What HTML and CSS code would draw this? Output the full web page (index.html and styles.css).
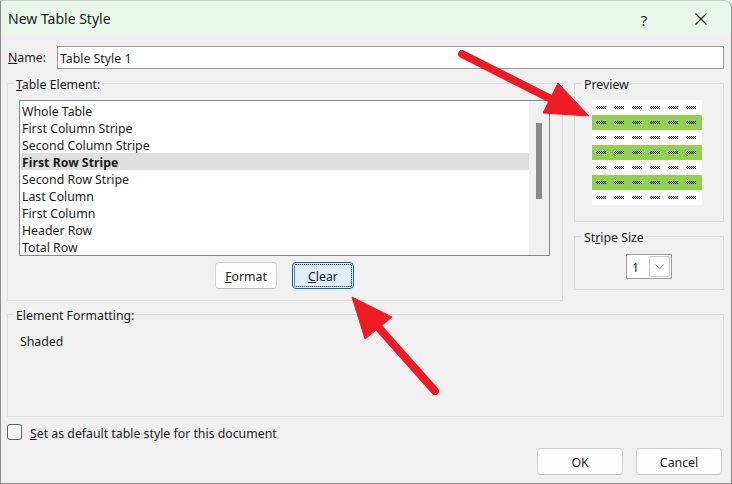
FILE: index.html
```html
<!DOCTYPE html>
<html lang="en">
<head>
    <meta charset="UTF-8">
    <title>New Table Style</title>
    <link rel="stylesheet" href="styles.css">
</head>
<body>
    <div class="dialog">
        <!-- Title bar -->
        <div class="titlebar">
            <span class="title">New Table Style</span>
            <div class="title-actions">
                <span class="help">?</span>
                <svg class="close" width="12" height="12" viewBox="0 0 12 12">
                    <path d="M0.5 0.5 L11.5 11.5 M11.5 0.5 L0.5 11.5" stroke="#1b1b1b" stroke-width="1.1" fill="none"/>
                </svg>
            </div>
        </div>

        <div class="content">
            <div class="name-row">
                <span class="name-label"><u>N</u>ame:</span>
                <div class="text-input">Table Style 1</div>
            </div>

            <div class="middle">
                <fieldset class="group element-group">
                    <legend><u>T</u>able Element:</legend>
                    <div class="listbox">
                        <ul class="list">
                            <li>Whole Table</li>
                            <li>First Column Stripe</li>
                            <li>Second Column Stripe</li>
                            <li class="selected">First Row Stripe</li>
                            <li>Second Row Stripe</li>
                            <li>Last Column</li>
                            <li>First Column</li>
                            <li>Header Row</li>
                            <li>Total Row</li>
                        </ul>
                        <div class="scrollbar"><div class="thumb"></div></div>
                    </div>
                    <div class="list-actions">
                        <button class="btn btn-small"><u>F</u>ormat</button>
                        <button class="btn btn-small btn-focus"><span class="focus-ring"><u>C</u>lear</span></button>
                    </div>
                </fieldset>

                <div class="side">
                    <fieldset class="group preview-group">
                        <legend>Preview</legend>
                        <div class="preview">
                            <div class="prow"><i></i><i></i><i></i><i></i><i></i><i></i></div>
                            <div class="prow green"><i></i><i></i><i></i><i></i><i></i><i></i></div>
                            <div class="prow"><i></i><i></i><i></i><i></i><i></i><i></i></div>
                            <div class="prow green"><i></i><i></i><i></i><i></i><i></i><i></i></div>
                            <div class="prow"><i></i><i></i><i></i><i></i><i></i><i></i></div>
                            <div class="prow green"><i></i><i></i><i></i><i></i><i></i><i></i></div>
                            <div class="prow"><i></i><i></i><i></i><i></i><i></i><i></i></div>
                        </div>
                    </fieldset>
                    <fieldset class="group stripe-group">
                        <legend>St<u>r</u>ipe Size</legend>
                        <div class="select">
                            <span class="select-value">1</span>
                            <span class="drop">
                                <svg width="9" height="5" viewBox="0 0 9 5">
                                    <path d="M0.5 0.5 L4.5 4.5 L8.5 0.5" stroke="#707070" fill="none"/>
                                </svg>
                            </span>
                        </div>
                    </fieldset>
                </div>
            </div>

            <fieldset class="group format-group">
                <legend>Element Formatting:</legend>
                <p class="shaded">Shaded</p>
            </fieldset>

            <div class="check-row">
                <span class="checkbox"></span>
                <span class="check-label"><u>S</u>et as default table style for this document</span>
            </div>

            <div class="footer">
                <button class="btn btn-wide">OK</button>
                <button class="btn btn-wide">Cancel</button>
            </div>
        </div>

        <!-- red annotation arrows -->
        <svg class="annotations" width="732" height="484" viewBox="0 0 732 484">
            <g fill="#ed1c24" stroke="#ed1c24">
                <line x1="462" y1="54" x2="553" y2="100" stroke-width="8" stroke-linecap="round"/>
                <polygon points="589,116 558,83 543,113" stroke-width="1"/>
                <line x1="435" y1="391" x2="379" y2="328" stroke-width="8" stroke-linecap="round"/>
                <polygon points="352,297 392,317 365,339" stroke-width="1"/>
            </g>
        </svg>
    </div>
</body>
</html>
```

FILE: styles.css
```css
* {
    margin: 0;
    padding: 0;
    box-sizing: border-box;
}

body {
    font-family: 'Noto Sans', 'Segoe UI', sans-serif;
    font-size: 12.3px;
    color: #1b1b1b;
    background: #f0f0f0;
}

.dialog {
    position: relative;
    width: 732px;
    height: 484px;
    border: 1px solid #8e8e8e;
    border-top-color: #c4cfc7;
    border-radius: 0 8px 0 0;
    background: #f0f0f0;
    overflow: hidden;
}

/* Title bar */
.titlebar {
    height: 35px;
    background: #e8f6eb;
    display: flex;
    align-items: center;
    justify-content: space-between;
    padding-left: 7px;
}

.title {
    font-size: 14px;
}

.title-actions {
    display: flex;
    align-items: center;
}

.help {
    width: 10px;
    text-align: center;
    font-size: 15px;
    margin-right: 46px;
    padding-top: 2px;
}

.close {
    margin-right: 24px;
}

/* Main area */
.content {
    padding: 10px 7px 0 6px;
}

.name-row {
    display: flex;
    align-items: center;
    height: 23px;
}

.name-label {
    width: 50px;
    padding-left: 1px;
}

.text-input {
    flex: 1;
    height: 23px;
    line-height: 19px;
    padding: 2px 0 0 2px;
    border: 1px solid #9a9a9a;
    background: #fff;
}

.middle {
    display: flex;
    gap: 11px;
    margin-top: 4px;
}

.group {
    border: 1px solid #dcdcdc;
    min-width: 0;
}

.group legend {
    padding: 4px 2px 0;
    line-height: 16px;
}

/* Table element list */
.element-group {
    width: 556px;
    height: 228px;
    padding: 7px 12px 0 11px;
}

.element-group legend {
    margin-left: -5px;
}

.listbox {
    display: flex;
    height: 156px;
    border: 1px solid #828790;
    background: #fff;
}

.list {
    flex: 1;
    list-style: none;
    padding: 1px 0 0 1px;
}

.list li {
    height: 17px;
    line-height: 15px;
    padding: 2px 0 0 1px;
    white-space: nowrap;
}

.list li.selected {
    background: #dfdfe3;
    font-weight: bold;
}

.scrollbar {
    width: 20px;
    background: #f0f0f0;
    padding: 22px 0 0 7px;
}

.thumb {
    width: 6px;
    height: 76px;
    background: #8a8a8a;
}

.list-actions {
    display: flex;
    justify-content: center;
    gap: 15px;
    margin-top: 6px;
}

.btn {
    height: 27px;
    padding-top: 2px;
    border: 1px solid #d0d0d0;
    border-bottom-color: #c2c2c2;
    border-radius: 4px;
    background: #fdfdfd;
    font: inherit;
    color: inherit;
}

.btn-small {
    width: 62px;
}

.btn-focus {
    border-color: #0067c0;
    background: #e0eef9;
    padding: 1px;
}

.focus-ring {
    display: flex;
    align-items: center;
    justify-content: center;
    height: 100%;
    padding-top: 2px;
    border: 1px dotted #111;
    border-radius: 2px;
}

/* Right column */
.side {
    width: 150px;
    display: flex;
    flex-direction: column;
    gap: 4px;
}

.preview-group {
    height: 149px;
    padding: 7px 0 0 17px;
}

.preview-group legend {
    margin-left: -10px;
}

.preview {
    width: 110px;
}

.prow {
    height: 15px;
    background: #fff;
    display: flex;
    align-items: center;
    gap: 8px;
    padding-left: 4px;
}

.prow.green {
    background: #92d050;
}

.prow i {
    width: 10px;
    height: 3px;
    background: repeating-conic-gradient(#000 0 25%, transparent 0 50%) 0 0 / 2px 2px;
}

.stripe-group {
    height: 64px;
    padding: 8px 8px 0;
}

.stripe-group legend {
    margin-left: -1px;
}

.select {
    width: 46px;
    height: 25px;
    margin: 0 auto;
    display: flex;
    align-items: center;
    justify-content: space-between;
    padding: 0 1px 0 5px;
    border: 1px solid #9a9a9a;
    background: #fff;
}

.select-value {
    padding-top: 2px;
}

.drop {
    width: 21px;
    height: 21px;
    display: flex;
    align-items: center;
    justify-content: center;
    border: 1px solid #cbcbcb;
    border-radius: 2px;
}

/* Element formatting */
.format-group {
    height: 113px;
    margin-top: 3px;
    padding: 9px 0 0 12px;
}

.format-group legend {
    margin-left: -6px;
}

.shaded {
    line-height: 17px;
}

.check-row {
    display: flex;
    align-items: center;
    gap: 8px;
    height: 16px;
    margin-top: 7px;
}

.check-label {
    padding-top: 2px;
}

.checkbox {
    width: 15px;
    height: 16px;
    border: 1px solid #616161;
    border-radius: 3px;
    background: #f8f8f8;
}

.footer {
    display: flex;
    justify-content: flex-end;
    gap: 13px;
    margin-top: 8px;
    padding-right: 2px;
}

.btn-wide {
    width: 86px;
}

.annotations {
    position: absolute;
    top: -1px;
    left: -1px;
    pointer-events: none;
}
```
